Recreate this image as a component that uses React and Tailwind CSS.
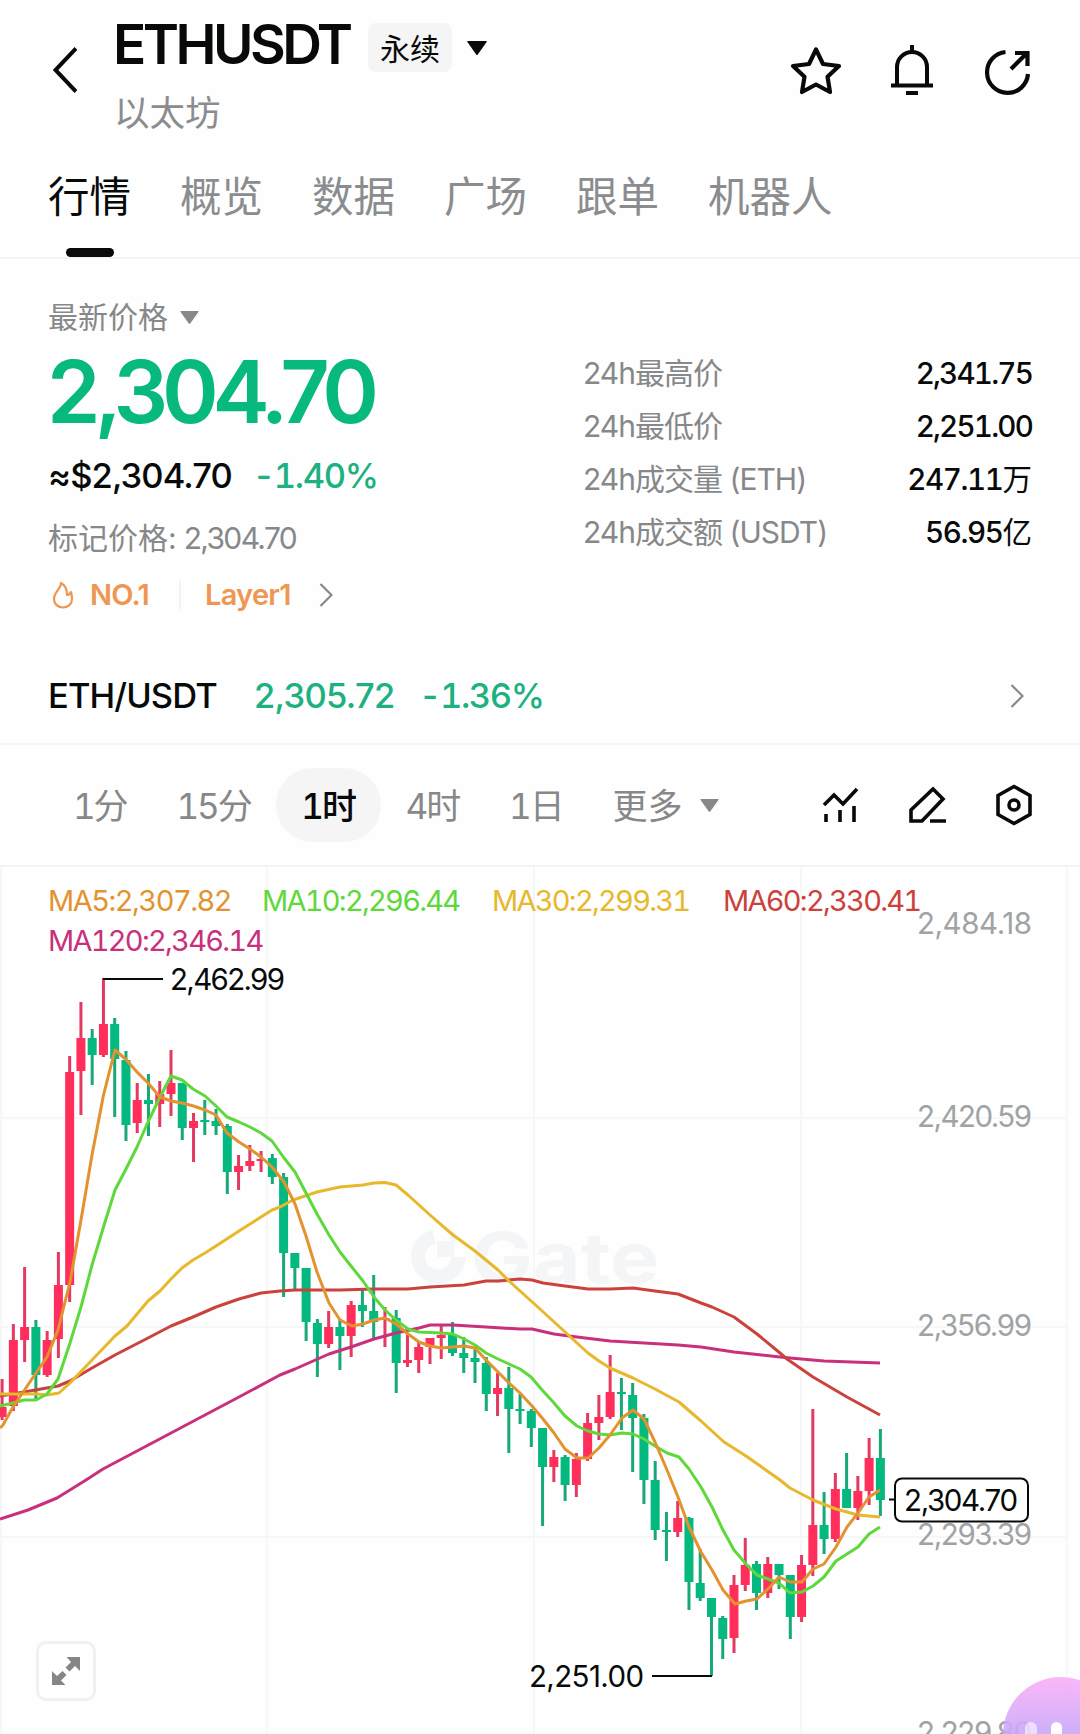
import React from 'react';

const UP = '#ff2e5b';
const DOWN = '#03b980';

// K线数据: [涨跌, 最高, 实体顶, 实体底, 最低]
const candles = [
  [1, 1379, 1407, 1417, 1420], [1, 1324, 1340, 1406, 1411], [1, 1267, 1327, 1340, 1362],
  [0, 1320, 1327, 1375, 1399], [1, 1331, 1340, 1375, 1377], [1, 1252, 1285, 1339, 1358],
  [1, 1056, 1072, 1285, 1302], [1, 1002, 1038, 1071, 1115], [0, 1029, 1038, 1055, 1085],
  [1, 978, 1024, 1055, 1057], [0, 1018, 1024, 1059, 1117], [0, 1051, 1060, 1125, 1141],
  [1, 1083, 1100, 1123, 1133], [0, 1074, 1100, 1104, 1136], [1, 1081, 1094, 1104, 1127],
  [1, 1050, 1083, 1094, 1116], [0, 1083, 1083, 1128, 1140], [1, 1113, 1121, 1128, 1162],
  [0, 1100, 1120, 1122, 1135], [0, 1109, 1121, 1126, 1135], [0, 1124, 1126, 1172, 1194],
  [1, 1155, 1166, 1172, 1190], [1, 1145, 1161, 1166, 1171], [1, 1151, 1159, 1161, 1172],
  [0, 1154, 1158, 1177, 1184], [0, 1173, 1177, 1253, 1297], [0, 1253, 1253, 1268, 1289],
  [0, 1268, 1268, 1322, 1341], [0, 1319, 1323, 1344, 1377], [1, 1311, 1327, 1344, 1348],
  [0, 1319, 1327, 1336, 1370], [1, 1301, 1305, 1336, 1357], [0, 1290, 1305, 1311, 1327],
  [0, 1275, 1311, 1322, 1338], [1, 1307, 1318, 1320, 1347], [0, 1310, 1318, 1363, 1393],
  [1, 1335, 1360, 1363, 1367], [1, 1341, 1347, 1360, 1373], [1, 1338, 1338, 1347, 1364],
  [1, 1324, 1335, 1338, 1359], [0, 1322, 1334, 1353, 1356], [0, 1337, 1353, 1358, 1373],
  [0, 1347, 1358, 1362, 1383], [0, 1357, 1363, 1394, 1411], [1, 1373, 1388, 1394, 1416],
  [0, 1367, 1388, 1409, 1453], [0, 1394, 1409, 1411, 1424], [0, 1409, 1411, 1428, 1447],
  [0, 1428, 1428, 1467, 1526], [1, 1450, 1457, 1467, 1482], [0, 1455, 1457, 1485, 1501],
  [1, 1453, 1459, 1485, 1497], [1, 1413, 1423, 1459, 1461], [1, 1395, 1417, 1423, 1440],
  [1, 1355, 1392, 1417, 1419], [0, 1378, 1392, 1394, 1430], [0, 1383, 1395, 1418, 1472],
  [0, 1414, 1418, 1480, 1504], [0, 1461, 1480, 1530, 1540], [0, 1512, 1530, 1532, 1561],
  [1, 1501, 1518, 1532, 1537], [0, 1517, 1518, 1582, 1610], [0, 1549, 1583, 1598, 1601],
  [0, 1598, 1598, 1617, 1676], [0, 1616, 1618, 1639, 1659], [1, 1575, 1585, 1638, 1653],
  [1, 1538, 1565, 1585, 1591], [0, 1561, 1564, 1593, 1610], [1, 1557, 1564, 1593, 1598],
  [0, 1564, 1564, 1575, 1589], [0, 1575, 1575, 1617, 1639], [1, 1555, 1565, 1617, 1622],
  [1, 1409, 1525, 1565, 1576], [0, 1492, 1525, 1539, 1554], [1, 1473, 1489, 1539, 1542],
  [0, 1453, 1489, 1508, 1508], [1, 1476, 1491, 1508, 1520], [1, 1438, 1458, 1491, 1505],
  [0, 1429, 1458, 1500, 1516],
];

// 均线
const maLines = [
  {
    color: '#c9307c',
    points: '0,1519 28,1510 57,1498 86,1480 103,1469 137,1451 171,1433 205,1415 239,1397 280,1375 295,1369 329,1354 351,1347 374,1339 396,1333 419,1328 430,1325 453,1325 486,1327 520,1329 532,1329 554,1334 577,1337 610,1341 644,1343 678,1345 701,1347 734,1352 780,1357 790,1358 824,1361 880,1363',
  },
  {
    color: '#cb423c',
    points: '0,1396 24,1392 58,1386 70,1381 92,1368 115,1355 148,1338 171,1326 193,1317 216,1307 239,1299 261,1293 280,1291 295,1290 340,1290 374,1289 408,1289 430,1287 464,1285 486,1281 498,1281 520,1279 532,1280 543,1283 565,1286 588,1289 610,1289 633,1288 655,1291 678,1294 701,1303 712,1307 734,1317 757,1334 780,1353 787,1359 813,1377 847,1397 880,1415',
  },
  {
    color: '#e8b82c',
    points: '0,1394 36,1394 47,1395 59,1393 70,1383 92,1360 115,1336 127,1326 148,1301 160,1291 171,1279 182,1268 193,1260 205,1253 216,1246 239,1231 261,1217 272,1210 280,1207 293,1200 317,1192 340,1187 363,1185 374,1183 385,1182.5 396,1185 408,1195 430,1215 453,1235 475,1251 498,1270 509,1281 540,1309 577,1343 588,1353 599,1361 610,1368 633,1378 655,1389 679,1402 701,1421 724,1442 746,1456 780,1480 790,1488 813,1500 836,1509 858,1515 880,1517',
  },
  {
    color: '#5fd83c',
    points: '0,1406 13,1403 24,1400 36,1400 47,1394 58,1379 70,1343 81,1307 92,1265 103.5,1227 115,1190 126,1169 137,1147 148,1122 160,1097 171,1076 182,1080 193,1089 205,1096 216,1106 227,1117 239,1122 250,1127 261,1133 272,1141 284,1158 295,1172 306,1193 317,1214 329,1235 340,1252 351,1266 363,1281 374,1297 385,1310 396,1320 408,1329 419,1332 441,1333 453,1334 464,1339 475,1345 486,1353 498,1359 509,1364 520,1369 531,1377 543,1391 554,1403 565,1416 577,1426 588,1431 599,1434 610,1435 622,1433 633,1434 644,1439 655,1446 667,1453 679,1457 689,1469 701,1487 712,1507 723,1530 734,1550 746,1564 757,1575 768,1579 779,1583 790,1593 802,1592 813,1586 824,1577 836,1561 847,1554 858,1547 869,1534 880,1527',
  },
  {
    color: '#e2932f',
    points: '0,1428 3,1425 13,1407 24.5,1390 36,1373 47,1357 58,1330 70,1282 81,1220 92,1155 103.5,1095 115,1050 126,1059.5 137,1072 148,1083 160,1097 171,1101 182,1103 193.5,1106 205,1110 216,1115 227,1133 239,1142 250,1149 261,1157 272,1167 284,1182 295,1204 306,1236 317,1272 329,1303 340,1320 352,1326 363,1324 374,1320 385,1318 396,1324 408,1334 419,1342 430,1346 441,1348 453,1347 464,1346 475,1348 486,1360 498,1372 509,1383 520,1393 532,1406 543,1419 554,1433 565,1449 577,1458 588,1458 599,1448 610,1435 622,1418 633,1410 644,1419 655,1442 667,1470 678,1497 689,1527 701,1552 712,1570 723,1590 735,1604 746,1601 757,1599 769,1588 779,1577 790,1582 802,1582 813,1569 824,1564 836,1547 847,1527 858,1513 869,1497 880,1490',
  },
];

const axis = [
  { label: '2,484.18', y: 934 },
  { label: '2,420.59', y: 1127 },
  { label: '2,356.99', y: 1336 },
  { label: '2,293.39', y: 1545 },
  { label: '2,229.80', y: 1743 },
];

const tabs = ['行情', '概览', '数据', '广场', '跟单', '机器人'];

const stats = [
  { name: '24h最高价', value: '2,341.75' },
  { name: '24h最低价', value: '2,251.00' },
  { name: '24h成交量 (ETH)', value: '247.11', unit: '万' },
  { name: '24h成交额 (USDT)', value: '56.95', unit: '亿' },
];

const periods = ['1分', '15分', '1时', '4时', '1日'];

function Triangle({ className }) {
  return (
    <svg viewBox="0 0 20 14" className={className} fill="currentColor">
      <path d="M0.8 0h18.4q1 0 .4 1L10.8 13.4q-.8 1-1.6 0L.4 1Q-.2 0 .8 0z" />
    </svg>
  );
}

function Chevron({ className }) {
  return (
    <svg viewBox="0 0 14 24" className={className} fill="none" stroke="currentColor" strokeWidth="2.2">
      <path d="M1.5 1l11 11-11 11" />
    </svg>
  );
}

function Header() {
  return (
    <header className="flex h-[148px] items-start">
      <svg width="24" height="46" viewBox="0 0 24 46" className="ml-[53px] mt-[47px]" fill="none" stroke="#080a09" strokeWidth="4">
        <path d="M23 1.500L2.500 23 23 44.500" />
      </svg>
      <div className="ml-[36px] pt-[19px]">
        <div className="flex h-[54px] items-start">
          <h1 className="w-[255px] whitespace-nowrap text-[55px] leading-[51px] font-semibold tracking-[-0.064em]">ETHUSDT</h1>
          <span className="mt-[4px] flex h-[49px] w-[84px] items-center justify-center rounded-lg bg-[#f5f5f5] pt-[3px] text-[30px]">永续</span>
          <Triangle className="ml-[15px] mt-[22px] h-[14px] w-[20px]" />
        </div>
        <p className="mt-[21px] ml-[1px] text-[35.500px] leading-[40px] text-[#8a8c8e]">以太坊</p>
      </div>
      <div className="ml-auto mt-[44px] mr-[49px] flex text-[#080a09]">
        <svg width="52" height="52" viewBox="0 0 52 52" fill="none" stroke="currentColor" strokeWidth="4.200" strokeLinejoin="round">
          <path d="M26 5.500l7 14.500 16 2-11.500 10.700 2.500 15.300-14-7.500-14 7.500 2.500-15.300L3 22l16-2z" />
        </svg>
        <svg width="44" height="52" viewBox="0 0 44 52" className="ml-[48px]" fill="none" stroke="currentColor" strokeWidth="4">
          <path d="M22 1v6M7 41V23a15 15 0 0 1 30 0v18M1 41.500h42M16 49h12" />
        </svg>
        <svg width="46" height="52" viewBox="0 0 46 52" className="ml-[51px]" fill="none" stroke="currentColor" strokeWidth="4.200">
          <path d="M20.500 8A20.500 20.500 0 1 0 43 30M26 25L42 9M30 9h12.500v13" />
        </svg>
      </div>
    </header>
  );
}

function Tabs() {
  return (
    <nav className="flex h-[111px] gap-[49px] border-b-2 border-[#f3f5f5] pt-[25px] pl-[48px] text-[41.500px] leading-[48px] text-[#8a8c8e]">
      {tabs.map((tab, i) => (
        <div key={tab} className={i === 0 ? 'flex flex-col items-center gap-[27px] text-[#080a09]' : ''}>
          <span>{tab}</span>
          {i === 0 && <span className="h-[9px] w-[48px] rounded-full bg-[#080a09]" />}
        </div>
      ))}
    </nav>
  );
}

function Summary() {
  return (
    <section className="flex h-[387px] justify-between pr-[48px] pl-[48px]">
      <div className="pt-[38px]">
        <div className="flex items-center gap-[12px] text-[30px] leading-[40px] text-[#868889]">
          最新价格
          <Triangle className="h-[13px] w-[19px]" />
        </div>
        <div className="mt-[10px] -ml-px whitespace-nowrap text-[86px] leading-[90px] font-semibold tracking-[-0.072em] text-[#07b97f]">2,304.70</div>
        <div className="mt-[19px] flex gap-[21px] whitespace-nowrap text-[34.500px] leading-[40px] font-medium tracking-[-0.026em]">
          <span>≈$2,304.70</span>
          <span className="tracking-[-0.04em] text-[#1bb181] tabular-nums">-1.40%</span>
        </div>
        <div className="mt-[22px] whitespace-nowrap text-[30px] leading-[40px] text-[#868889]">
          标记价格:<span className="ml-[7px] tracking-[-0.055em]">2,304.70</span>
        </div>
        <div className="mt-[17px] flex items-center text-[29px] leading-[40px] font-semibold tracking-[-0.025em] text-[#ee9752]">
          <svg width="22" height="28" viewBox="0 0 22 28" className="ml-[4px]" fill="none" stroke="currentColor" strokeWidth="2.2" strokeLinejoin="round">
            <path d="M9 2c.5 5-7 9-7 16 0 5 4 8.500 9 8.500s9-3.500 9-8.500c0-3-.5-5-1-7-1 2-2 3-4 3C15 9 13 4 9 2z" />
          </svg>
          <span className="ml-[16px] w-[61px]">NO.1</span>
          <span className="ml-[28px] h-[28px] w-[2px] bg-[#f1f2f3]" />
          <span className="ml-[24px]">Layer1</span>
          <Chevron className="ml-[28px] h-[24px] w-[14px] text-[#868889]" />
        </div>
      </div>
      <div className="w-[449px] pt-[88px] text-[29.500px] leading-[53px]">
        {stats.map((s) => (
          <div key={s.name} className="flex justify-between whitespace-nowrap">
            <span className="text-[30px] tracking-[-0.033em] text-[#868889]">{s.name}</span>
            <span className="flex">
              <span className={`font-medium tabular-nums ${s.unit ? 'tracking-[-0.047em]' : 'tracking-[-0.06em]'}`}>{s.value}</span>
              {s.unit}
            </span>
          </div>
        ))}
      </div>
    </section>
  );
}

function SpotRow() {
  return (
    <div className="flex h-[99px] items-center border-b-2 border-[#f3f5f5] pt-[2px] pl-[48px] text-[34.500px] font-medium">
      <span className="w-[206px] tracking-[-0.026em]">ETH/USDT</span>
      <span className="w-[165px] tracking-[-0.02em] text-[#1bb181]">2,305.72</span>
      <span className="tracking-[-0.04em] text-[#1bb181] tabular-nums">-1.36%</span>
      <Chevron className="mr-[56px] ml-auto h-[24px] w-[14px] text-[#868889]" />
    </div>
  );
}

function PeriodBar() {
  return (
    <div className="flex h-[122px] items-center border-b-2 border-[#f3f5f5] pl-[48px] text-[35px] leading-[40px] text-[#868889] tabular-nums">
      {periods.map((p) => (
        <span
          key={p}
          className={
            p === '1时'
              ? 'flex h-[74px] w-[105px] items-center justify-center rounded-full bg-[#f5f5f5] pt-[2px] font-medium tracking-[-0.06em] text-[#080a09]'
              : 'px-[25px] pt-[2px] whitespace-nowrap tracking-[-0.06em]'
          }
        >
          {p}
        </span>
      ))}
      <span className="ml-[25px] pt-[2px] whitespace-nowrap">更多</span>
      <Triangle className="ml-[17px] h-[13px] w-[19px]" />
      <div className="mr-[47px] ml-auto flex items-center gap-[49px] text-[#080a09]">
        <svg width="37" height="40" viewBox="0 0 37 40" fill="none" stroke="currentColor" strokeWidth="3.600">
          <path d="M2 20L12 10l9 9L35 4M4 37v-8M18 37V25M32 37V21" />
        </svg>
        <svg width="38" height="40" viewBox="0 0 38 40" fill="none" stroke="currentColor" strokeWidth="3.600">
          <path d="M3 36V25L25 4l10 10L14 36zM22 36h16" />
        </svg>
        <svg width="38" height="42" viewBox="0 0 38 42" fill="none" stroke="currentColor" strokeWidth="3.600">
          <path d="M19 2.500l16 9v19l-16 9-16-9v-19z" />
          <circle cx="19" cy="21" r="5" />
        </svg>
      </div>
    </div>
  );
}

function Chart() {
  return (
    <section className="relative h-[867px] overflow-hidden">
      <svg width="1080" height="867" viewBox="0 867 1080 867" className="block" fontSize="29.500">
        <g stroke="#f6f8f8" strokeWidth="2">
          <path d="M1 867V1734M267 867V1734M534 867V1734M801 867V1734M1067 867V1734" />
          <path d="M0 1118H1067M0 1327H1067M0 1537H1067" />
        </g>
        <g>
          <path d="M434 1237A20 20 0 1 0 458 1257" fill="none" stroke="#f3f5f6" strokeWidth="14" />
          <path d="M437 1241h13v-9h6v9h-2v16h-17z" fill="#f3f5f6" />
          <text x="471" y="1283" fontSize="70" fontWeight="700" fill="#f3f5f6" textLength="188" lengthAdjust="spacingAndGlyphs">Gate</text>
        </g>
        {candles.map(([up, high, top, bottom, low], i) => {
          const x = 2.1 + i * 11.26;
          return (
            <g key={i} fill={up ? UP : DOWN}>
              <rect x={x - 1.5} y={high} width="3" height={low - high} fill={up ? '#e23a60' : '#18a878'} />
              <rect x={x - 4.5} y={top} width="9" height={bottom - top} />
            </g>
          );
        })}
        {maLines.map((line) => (
          <polyline key={line.color} points={line.points} fill="none" stroke={line.color} strokeWidth="3" strokeLinejoin="round" />
        ))}
        {axis.map((a) => (
          <text key={a.label} x="917" y={a.y} fill="#a0a3a5" textLength="115">{a.label}</text>
        ))}
        <g stroke="#080a09" strokeWidth="2">
          <path d="M103 979H163M652 1676H712M889 1499.500H895" />
          <rect x="895" y="1478.500" width="133" height="43" rx="7" fill="#fff" />
        </g>
        <g fill="#080a09">
          <text x="170" y="990" textLength="115">2,462.99</text>
          <text x="529" y="1687" textLength="115">2,251.00</text>
          <text x="904" y="1511" textLength="114">2,304.70</text>
        </g>
      </svg>

      <div className="absolute top-[14px] left-[48px] flex w-[900px] flex-wrap text-[29px] leading-[40px] tracking-[-0.06em] whitespace-nowrap tabular-nums">
        <span className="w-[214px] tracking-[-0.052em] text-[#e2932f]">MA5:2,307.82</span>
        <span className="w-[230px] text-[#5fd83c]">MA10:2,296.44</span>
        <span className="w-[231px] text-[#e8b82c]">MA30:2,299.31</span>
        <span className="w-[200px] text-[#cb423c]">MA60:2,330.41</span>
        <span className="text-[#c9307c]">MA120:2,346.14</span>
      </div>

      <button className="absolute top-[774px] left-[36px] flex h-[60px] w-[60px] items-center justify-center rounded-[10px] border-3 border-[#f1f1f1] bg-white">
        <svg width="28" height="28" viewBox="0 0 28 28" fill="#868686">
          <path d="M14.500 0H28v14l-5-5-5.500 5.500-4-4L19 5zM0 28V14l5 5 5.500-5 4 4L9 23.500l4.500 4.500z" />
        </svg>
      </button>

      <div className="absolute top-[810px] left-[1003px] h-[116px] w-[116px] rounded-full bg-linear-to-b from-[#fbb0f8] to-[#8f9cfb] opacity-90">
        <span className="absolute top-[45px] left-[22px] h-[30px] w-[12px] rounded-full bg-white/60" />
        <span className="absolute top-[45px] left-[48px] h-[30px] w-[11px] rounded-full bg-white" />
      </div>
    </section>
  );
}

export default function App() {
  return (
    <div className="h-[1734px] w-[1080px] overflow-hidden bg-[#fefefe] font-[Inter,'Noto_Sans_CJK_SC',sans-serif] text-[#080a09]">
      <Header />
      <Tabs />
      <Summary />
      <SpotRow />
      <PeriodBar />
      <Chart />
    </div>
  );
}
